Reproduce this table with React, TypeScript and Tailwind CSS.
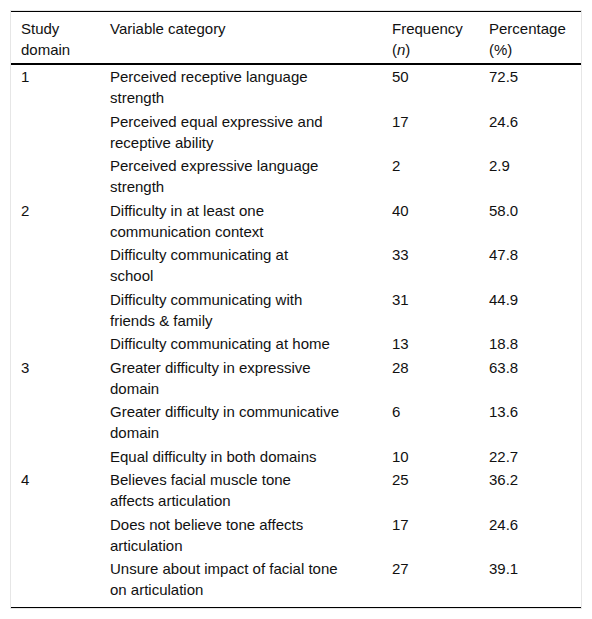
type Row = {
  domain?: string
  category: string[]
  freq: string
  pct: string
}

const ROWS: Row[] = [
  { domain: '1', category: ['Perceived receptive language', 'strength'], freq: '50', pct: '72.5' },
  { category: ['Perceived equal expressive and', 'receptive ability'], freq: '17', pct: '24.6' },
  { category: ['Perceived expressive language', 'strength'], freq: '2', pct: '2.9' },
  { domain: '2', category: ['Difficulty in at least one', 'communication context'], freq: '40', pct: '58.0' },
  { category: ['Difficulty communicating at', 'school'], freq: '33', pct: '47.8' },
  { category: ['Difficulty communicating with', 'friends & family'], freq: '31', pct: '44.9' },
  { category: ['Difficulty communicating at home'], freq: '13', pct: '18.8' },
  { domain: '3', category: ['Greater difficulty in expressive', 'domain'], freq: '28', pct: '63.8' },
  { category: ['Greater difficulty in communicative', 'domain'], freq: '6', pct: '13.6' },
  { category: ['Equal difficulty in both domains'], freq: '10', pct: '22.7' },
  { domain: '4', category: ['Believes facial muscle tone', 'affects articulation'], freq: '25', pct: '36.2' },
  { category: ['Does not believe tone affects', 'articulation'], freq: '17', pct: '24.6' },
  { category: ['Unsure about impact of facial tone', 'on articulation'], freq: '27', pct: '39.1' },
]

export default function App() {
  return (
    <div className="min-h-[619px] bg-white pl-[10px] pt-[10px] font-['Liberation_Sans',Arial,sans-serif] text-[15px] leading-[21px] text-[#111]">
      <div className="w-[572px] border border-[#e6e6e6]">
        <table className="w-full table-fixed border-collapse border-t border-b border-black">
          <colgroup>
            <col className="w-[89px]" />
            <col className="w-[282px]" />
            <col className="w-[97px]" />
            <col />
          </colgroup>
          <thead>
            <tr className="border-b-2 border-black text-left align-top">
              <th className="pl-[10px] pt-[6px] pb-[3px] font-normal">
                Study
                <br />
                domain
              </th>
              <th className="pl-[10px] pt-[6px] pb-[3px] font-normal">Variable category</th>
              <th className="pl-[10px] pt-[6px] pb-[3px] font-normal">
                Frequency
                <br />(<i>n</i>)
              </th>
              <th className="pl-[10px] pt-[6px] pb-[3px] font-normal">
                Percentage
                <br />
                (%)
              </th>
            </tr>
          </thead>
          <tbody>
            {ROWS.map((row, i) => {
              const last = i === ROWS.length - 1
              const pad = last ? 'pt-px pb-[7px]' : 'pt-px pb-[1.5px]'
              return (
                <tr key={i} className="align-top">
                  <td className={`pl-[10px] ${pad}`}>{row.domain ?? ''}</td>
                  <td className={`pl-[10px] ${pad}`}>
                    {row.category.map((line, j) => (
                      <span key={j} className="block">
                        {line}
                      </span>
                    ))}
                  </td>
                  <td className={`pl-[10px] ${pad}`}>{row.freq}</td>
                  <td className={`pl-[10px] ${pad}`}>{row.pct}</td>
                </tr>
              )
            })}
          </tbody>
        </table>
      </div>
    </div>
  )
}
